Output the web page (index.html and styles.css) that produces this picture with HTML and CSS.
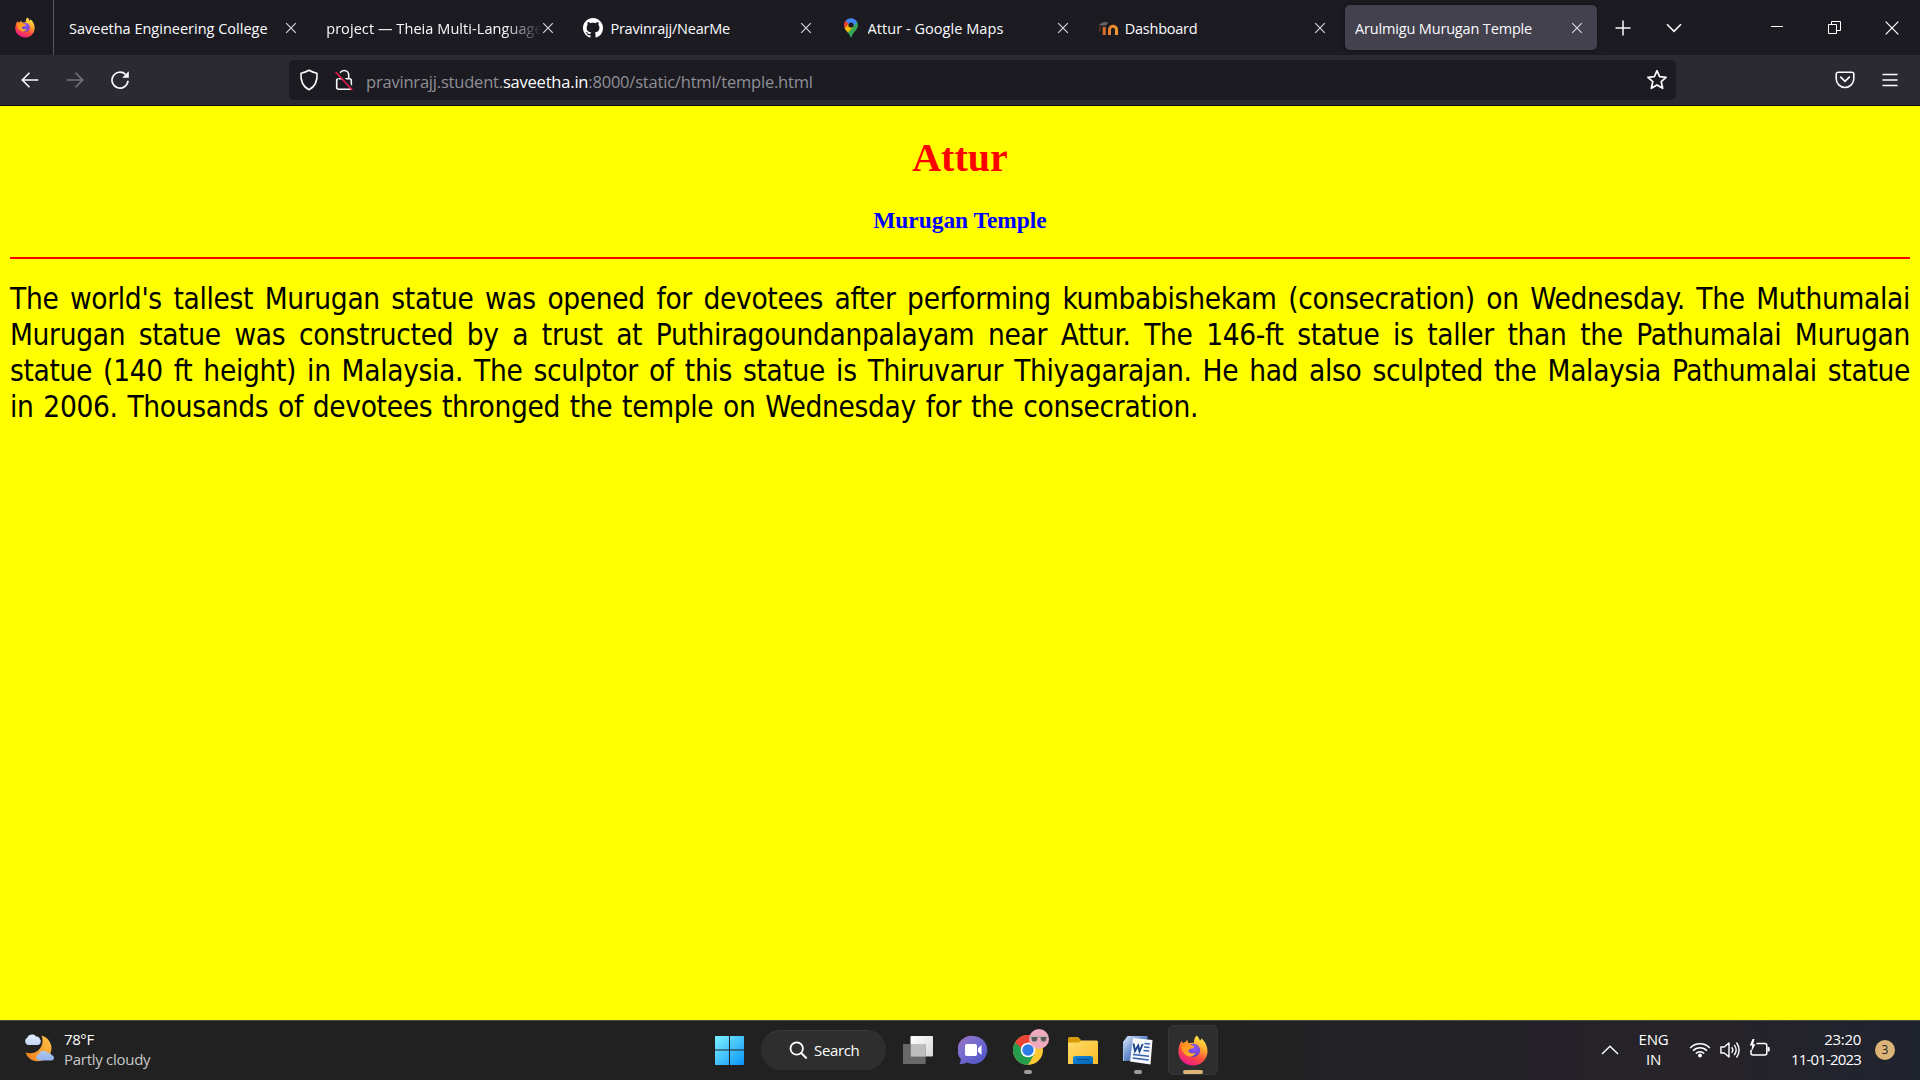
FILE: index.html
```html
<!DOCTYPE html>
<html lang="en">
<head>
<meta charset="utf-8">
<title>Arulmigu Murugan Temple</title>
<link rel="stylesheet" href="styles.css">
</head>
<body>
<svg class="defs" width="0" height="0" aria-hidden="true">
  <defs>
    <linearGradient id="ffBody" x1=".8" y1="0" x2=".3" y2="1"><stop offset="0" stop-color="#fff44f"/><stop offset=".35" stop-color="#ffa930"/><stop offset=".65" stop-color="#ff4d3d"/><stop offset="1" stop-color="#e8158f"/></linearGradient>
    <linearGradient id="ffHead" x1="0" y1="0" x2="1" y2="1"><stop offset="0" stop-color="#ff8a16"/><stop offset="1" stop-color="#ffb92e"/></linearGradient>
    <radialGradient id="ffGlobe" cx=".6" cy=".3" r=".8"><stop offset="0" stop-color="#9059ff"/><stop offset="1" stop-color="#5b3bb8"/></radialGradient>
    <symbol id="firefox" viewBox="0 0 30 30">
      <path fill="url(#ffBody)" d="M18.600 0c1.500 1 2.600 3 3.300 5 1-.2 1.300-1.300 1.400-2.300 3.900 3.300 6.300 8 6.200 13.300C29.300 24 23 30 15 30S.4 24 .4 16.300c0-4 1.100-8.300 3.600-11.100.2 1.200.5 1.900 1.100 2.500 1-.9 1.900-1.300 2.900-1.500L9 4l1.300 3.500 5.700-.3c-.3-2.700.8-5.400 2.600-7.200z"/>
      <circle cx="15.500" cy="14.800" r="6.600" fill="url(#ffGlobe)"/>
      <path fill="url(#ffHead)" d="M3.300 10.300c2-2.900 5-3.400 7.200-2.300 1.500.8 2.800 2.200 5.500 2.400.4 1.700-1.300 2.500-3.300 2.900-1.300.3-1.500 1.500-2.600 1.700 1 3 4.800 3.600 7.700 2.200-1.500 3.500-6 4.800-9.300 2.800-3.700-2.300-5.500-5.700-5.200-9.700z"/>
    </symbol>
    <symbol id="x" viewBox="0 0 12 12"><path d="M1.200 1.200l9.600 9.600M10.800 1.200L1.200 10.800" fill="none" stroke="currentColor" stroke-width="1.200"/></symbol>
    <linearGradient id="win" x1="0" y1="0" x2="1" y2="1"><stop offset="0" stop-color="#7df1ff"/><stop offset="1" stop-color="#0a94f8"/></linearGradient>
    <linearGradient id="tv" x1="0" y1="0" x2="1" y2="1"><stop offset="0" stop-color="#fff"/><stop offset="1" stop-color="#d8d8d8"/></linearGradient>
    <linearGradient id="chat" x1="0" y1="0" x2="1" y2="1"><stop offset="0" stop-color="#a36bb4"/><stop offset=".35" stop-color="#7b70cf"/><stop offset="1" stop-color="#4a4fc8"/></linearGradient>
    <linearGradient id="fold" x1="0" y1="0" x2="1" y2="1"><stop offset="0" stop-color="#ffdb6b"/><stop offset="1" stop-color="#f9bd27"/></linearGradient>
    <linearGradient id="foldBlue" x1="0" y1="0" x2="1" y2="1"><stop offset="0" stop-color="#1289dc"/><stop offset="1" stop-color="#0463b4"/></linearGradient>
    <linearGradient id="word" x1="0" y1="0" x2="1" y2="1"><stop offset="0" stop-color="#e5effc"/><stop offset=".45" stop-color="#6c93d0"/><stop offset="1" stop-color="#173f91"/></linearGradient>
    <linearGradient id="moon" x1="1" y1="0" x2="0" y2="1"><stop offset="0" stop-color="#ffc54a"/><stop offset="1" stop-color="#ef7d1a"/></linearGradient>
    <linearGradient id="cloud" x1="0" y1="0" x2="0" y2="1"><stop offset="0" stop-color="#e4eeff"/><stop offset="1" stop-color="#93b3ea"/></linearGradient>
    <linearGradient id="moodle" gradientUnits="userSpaceOnUse" x1="4" y1="0" x2="20" y2="0"><stop offset="0" stop-color="#d9652a"/><stop offset="1" stop-color="#f29a35"/></linearGradient>
  </defs>
</svg>

<header class="tabs">
  <div class="view"><svg width="20" height="21"><use href="#firefox"/></svg></div>
  <div class="tab"><span class="label t1">Saveetha Engineering College</span><svg class="close" width="12" height="12"><use href="#x"/></svg></div>
  <div class="tab"><span class="label t2 fade">project — Theia Multi-Language</span><svg class="close" width="12" height="12"><use href="#x"/></svg></div>
  <div class="tab">
    <svg class="fav" width="20" height="20" viewBox="0 0 16 16"><path fill="#fff" d="M8 0C3.580 0 0 3.580 0 8c0 3.540 2.290 6.530 5.470 7.590.4.070.55-.17.55-.38 0-.19-.01-.82-.01-1.490-2.010.37-2.530-.49-2.690-.94-.09-.23-.48-.94-.82-1.130-.28-.15-.68-.52-.01-.53.63-.01 1.080.58 1.230.82.72 1.210 1.870.87 2.330.66.070-.52.28-.87.51-1.070-1.780-.2-3.640-.89-3.640-3.950 0-.87.31-1.590.82-2.150-.08-.2-.36-1.020.08-2.120 0 0 .67-.21 2.200.82.64-.18 1.320-.27 2-.27s1.360.09 2 .27c1.530-1.040 2.200-.82 2.200-.82.44 1.100.16 1.920.08 2.120.51.56.82 1.270.82 2.150 0 3.070-1.870 3.750-3.650 3.950.29.25.54.73.54 1.480 0 1.070-.01 1.930-.01 2.200 0 .21.15.46.55.38A8.010 8.010 0 0 0 16 8c0-4.420-3.580-8-8-8z"/></svg>
    <span class="label t3">Pravinrajj/NearMe</span><svg class="close" width="12" height="12"><use href="#x"/></svg>
  </div>
  <div class="tab">
    <svg class="fav" width="20" height="20" viewBox="0 0 20 20"><path fill="#34a853" d="M3.200 9.500c1 3 3.800 4.500 5.200 7.300L10 20l1.500-3.300C13 13.500 16.900 11.500 16.900 7c0-1.200-.3-2.200-.7-3.100z"/><path fill="#fbbc04" d="M3.700 10.300c.9 1.800 2.200 2.800 3.300 4.300l5.400-6.200-5-3z"/><path fill="#ea4335" d="M4.700 2.600C3.600 3.800 3 5.300 3 7c0 1.300.3 2.400.8 3.300l4.500-5z"/><path fill="#4285f4" d="M4.700 2.600A7 7 0 0 1 16.200 3.900L11.800 9 7.500 5.900z"/><circle cx="10" cy="7" r="2.600" fill="#1c1b22"/></svg>
    <span class="label t4">Attur - Google Maps</span><svg class="close" width="12" height="12"><use href="#x"/></svg>
  </div>
  <div class="tab">
    <svg class="fav" width="20" height="20" viewBox="0 0 20 20"><path fill="none" stroke="url(#moodle)" stroke-width="3" d="M6.200 17V9M11.500 17v-5.500c0-4.300 7-4.300 7 0V17"/><path fill="#68605f" d="M.5 6.500L6 4l4.500.5L8 7.500l-4 .3z"/><path fill="none" stroke="#5a3322" stroke-width="1.500" d="M1.700 8v5.500"/></svg>
    <span class="label t5">Dashboard</span><svg class="close" width="12" height="12"><use href="#x"/></svg>
  </div>
  <div class="tab active"><span class="label t6">Arulmigu Murugan Temple</span><svg class="close" width="12" height="12"><use href="#x"/></svg></div>
  <svg class="plus" width="16" height="16" viewBox="0 0 16 16"><path d="M8 .5v15M.5 8h15" stroke="#fbfbfe" stroke-width="1.500"/></svg>
  <svg class="down" width="16" height="10" viewBox="0 0 16 10"><path d="M1 1.300l7 7 7-7" fill="none" stroke="#fbfbfe" stroke-width="1.600"/></svg>
  <div class="winctl">
    <svg width="13" height="13"><path d="M0 5.500h12" stroke="#fff"/></svg>
    <svg width="13" height="13"><path d="M.5 3.500h8v9h-8zM3.500 3.500v-3h9v9h-4" fill="none" stroke="#fff"/></svg>
    <svg width="14" height="14"><path d="M.7 .7l12.600 12.600M13.300 .7L.7 13.300" stroke="#fff" stroke-width="1.200"/></svg>
  </div>
</header>

<nav class="toolbar">
  <div class="navbtns">
    <svg width="18" height="18" viewBox="0 0 18 18"><path d="M17.300 9H1.300M8.500 1.800L1.300 9l7.200 7.200" fill="none" stroke="#fbfbfe" stroke-width="1.600"/></svg>
    <svg width="18" height="18" viewBox="0 0 18 18"><path d="M.7 9h16M9.500 1.800L16.700 9l-7.200 7.200" fill="none" stroke="#75747b" stroke-width="1.600"/></svg>
    <svg class="reload" width="20" height="20" viewBox="0 0 20 20"><path d="M15.500 4.300A8 8 0 1 0 18 10.800" fill="none" stroke="#fbfbfe" stroke-width="1.700"/><path d="M18.800 1.200v6.600h-6.600z" fill="#fbfbfe"/></svg>
  </div>
  <div class="urlbar">
    <svg class="shield" width="20" height="22" viewBox="0 0 20 22"><path d="M10 1.300c2.800 1.700 5.400 2.600 8 2.900.6 7.300-1.700 13.200-8 16.500C3.700 17.400 1.400 11.500 2 4.200c2.600-.3 5.200-1.200 8-2.900z" fill="none" stroke="#fbfbfe" stroke-width="1.600" stroke-linejoin="round"/></svg>
    <svg class="lock" width="20" height="22" viewBox="0 0 20 22"><path d="M5.700 6.500V6a4.500 4.500 0 0 1 9 0v3.500M5 9.800h10.500a1.800 1.800 0 0 1 1.800 1.800v6.800a1.800 1.800 0 0 1-1.800 1.800H4.500a1.800 1.800 0 0 1-1.800-1.800v-6.800a1.800 1.800 0 0 1 1.800-1.800" fill="none" stroke="#fbfbfe" stroke-width="1.600"/><path d="M3.200 2.200L19 19.500" stroke="#1c1b22" stroke-width="2"/><path d="M1.700 3l16.500 18" stroke="#e31b47" stroke-width="1.700"/></svg>
    <div class="url"><span class="u1">pravinrajj.student.</span><span class="u2">saveetha.in</span><span class="u3">:8000/static/html/temple.html</span></div>
    <svg class="star" width="22" height="22" viewBox="0 0 22 22"><path d="M11 1.700l2.600 6 6.500.6-4.900 4.300 1.500 6.700L11 15.900l-5.700 3.400 1.500-6.700-4.900-4.300 6.500-.6z" fill="none" stroke="#fbfbfe" stroke-width="1.700" stroke-linejoin="round"/></svg>
  </div>
  <div class="menus">
    <svg width="20" height="18" viewBox="0 0 20 18"><path d="M3.200 1.200h13.600a2 2 0 0 1 2 2v4.500a8.800 8.800 0 0 1-17.600 0V3.200a2 2 0 0 1 2-2z" fill="none" stroke="#fbfbfe" stroke-width="1.600"/><path d="M5.700 6.200L10 10.300l4.300-4.100" fill="none" stroke="#fbfbfe" stroke-width="1.700" stroke-linecap="round"/></svg>
    <svg width="16" height="14" viewBox="0 0 16 14"><path d="M.5 1.500h15M.5 7h15M.5 12.500h15" stroke="#fbfbfe" stroke-width="1.500"/></svg>
  </div>
</nav>

<main class="page">
  <h1>Attur</h1>
  <h3>Murugan Temple</h3>
  <hr>
  <div class="story">
    <div>The world's tallest Murugan statue was opened for devotees after performing kumbabishekam (consecration) on Wednesday. The Muthumalai</div>
    <div>Murugan statue was constructed by a trust at Puthiragoundanpalayam near Attur. The 146-ft statue is taller than the Pathumalai Murugan</div>
    <div>statue (140 ft height) in Malaysia. The sculptor of this statue is Thiruvarur Thiyagarajan. He had also sculpted the Malaysia Pathumalai statue</div>
    <div class="last">in 2006. Thousands of devotees thronged the temple on Wednesday for the consecration.</div>
  </div>
</main>

<footer class="taskbar">
  <div class="weather">
    <svg width="32" height="30" viewBox="0 0 32 30"><path fill="url(#moon)" d="M18.500 2.500c7 2 11.500 9 9.500 16-2.300 8-10 11-17 9.200-4.500-1.200-7-4.500-8.500-8.200 5 1.500 10.500.8 14-3.500 3.300-4 3.800-8.700 2-13.500z"/><path fill="url(#cloud)" d="M5 12a4 4 0 0 1-.5-7.500C5 1.500 11 0 13 3.500c2.500-.2 3.500 1 3.800 2.500 2 1.500 1 6-2 6zM17 27.500c-4.500 0-5-5.500-1-6.200.5-4 6.500-5 8.500-1.500 2-.3 3.500.7 4 2.200 3.500.5 3 5.500 0 5.500z"/></svg>
    <div class="two"><span class="w1">78°F</span><span class="w2">Partly cloudy</span></div>
  </div>
  <div class="apps">
    <div class="cell"><svg width="30" height="30" viewBox="0 0 30 30"><path fill="url(#win)" d="M.5 1H14v13.500H0V1.500zM15 1h13.500l.5.500v13H15zM0 15.500h14V30H.5l-.5-.5zM15 15.500h14v14l-.5.500H15z"/></svg></div>
    <div class="search"><svg width="19" height="19" viewBox="0 0 19 19"><circle cx="7.700" cy="7.500" r="6.200" fill="none" stroke="#fff" stroke-width="1.800"/><path d="M12.200 12l5.500 5.500" stroke="#fff" stroke-width="1.900"/></svg><span>Search</span></div>
    <div class="cell"><svg width="30" height="28" viewBox="0 0 30 28"><rect x="7.500" width="22.500" height="20.500" rx="1" fill="url(#tv)"/><rect y="8" width="22.700" height="20" rx="1" fill="#777" fill-opacity=".82"/><path d="M8 8h14.500v12.500H8z" fill="#bdbdbd"/></svg></div>
    <div class="cell"><svg width="30" height="30" viewBox="0 0 30 30"><path fill="url(#chat)" d="M15.500 1a14 14 0 1 1-6.500 26.500c-2.500 1.200-5 1.700-7.500 1.500 1-1.700 1.400-3.300 1.300-5A14 14 0 0 1 15.500 1z"/><rect x="7" y="9" width="12" height="12" rx="1.800" fill="#fff"/><path d="M20 13.200l3.500-3.200v10L20 16.800z" fill="#fff"/></svg></div>
    <div class="cell">
      <svg width="30" height="30" viewBox="0 0 30 30"><circle cx="15" cy="15" r="15" fill="#fcc934"/><path fill="#ea4335" d="M2 7.500A15 15 0 0 1 28 7.500H15L9 18.500z"/><path fill="#259b4c" d="M2 7.500a15 15 0 0 0 13 22.500l6.500-11.200H15z"/><circle cx="15" cy="15" r="7.300" fill="#fff"/><circle cx="15" cy="15" r="5.700" fill="#2d7ce8"/></svg>
      <svg class="avatar" width="20" height="20" viewBox="0 0 20 20"><circle cx="10" cy="10" r="10" fill="#f0a9bd"/><path d="M1.500 7.500h17" stroke="#a89c98" stroke-width="1.300"/><path d="M2 7.500h7q0 5.500-3.700 5.500T2 7.500zM11 7.500h7q0 5.500-3.400 5.500T11 7.500z" fill="#5d565a" stroke="#c2b3b4"/></svg>
      <i class="run"></i>
    </div>
    <div class="cell"><svg width="30" height="27" viewBox="0 0 30 27"><path fill="#d99a08" d="M0 1.500Q0 0 1.500 0H10l3.500 3.500V9H0z"/><path fill="url(#fold)" d="M0 5.500h10.500L14 3.500h14.500Q30 3.500 30 5v22H0z"/><path fill="url(#foldBlue)" d="M5 27v-5.500q0-2.500 2.500-2.500h15q2.500 0 2.500 2.500V27z"/><path d="M9 22.500h12" stroke="#064b8b" stroke-width="1.200"/></svg></div>
    <div class="cell">
      <svg width="30" height="30" viewBox="0 0 30 30"><path fill="url(#word)" d="M5 1h19.500l-1 24.500L0 26V7z"/><path d="M5 1L.5 7v19" fill="none" stroke="#a8c2eb"/><path fill="#f6f8fb" d="M10 3L29.500 5l-2 24.500L7 26.500z"/><path d="M21.500 8.500l5.500.6M21 12l5.500.6M20.500 15.500l5.700.6M10 19.500l16 1.800M9.700 23l16 2" stroke="#3762ad" stroke-width="1.500"/><path d="M10.500 8.500l1.500 7.500 3.200-5.500 1.300 6 3.200-7.500" fill="none" stroke="#1c438f" stroke-width="1.900"/></svg>
      <i class="run"></i>
    </div>
    <div class="cell on"><svg width="30" height="31"><use href="#firefox"/></svg><i class="run wide"></i></div>
  </div>
  <div class="tray">
    <svg class="up" width="18" height="10" viewBox="0 0 18 10"><path d="M1 9l8-7.800L17 9" fill="none" stroke="#fff" stroke-width="1.400"/></svg>
    <div class="two lang"><span>ENG</span><span>IN</span></div>
    <svg class="wifi" width="22" height="16" viewBox="0 0 22 16"><g fill="none" stroke="#fff" stroke-width="1.500"><path d="M1.200 6a13.500 13.500 0 0 1 19.600 0M4 8.800a9.700 9.700 0 0 1 14 0M6.800 11.500a5.900 5.900 0 0 1 8.400 0"/></g><circle cx="11" cy="13.600" r="2" fill="#fff"/></svg>
    <svg class="sound" width="20" height="18" viewBox="0 0 20 18"><g fill="none" stroke="#fff" stroke-width="1.400"><path d="M.9 6h3.300L9 2v14l-4.800-4H.9z" stroke-linejoin="round"/><path d="M11.700 6.300q2.200 2.700 0 5.400M14.200 3.900q4 5.100 0 10.200M16.500 1.500q5.200 7.500 0 15"/></g></svg>
    <svg class="batt" width="21" height="18" viewBox="0 0 21 18"><path d="M7.500 4.500h8.300q2 0 2 2v7.500q0 2-2 2H4q-2 0-2-2v-3" fill="none" stroke="#fff" stroke-width="1.500"/><path d="M18.500 8h1.200q1 0 1 1v2.500q0 1-1 1h-1.200zM3.500 0L.8 6.500h2.400L2.200 13l4.300-7.700H4.200L5.500 0z" fill="#fff"/></svg>
    <div class="two clock"><span class="c1">23:20</span><span class="c2">11-01-2023</span></div>
    <div class="count">3</div>
  </div>
</footer>
</body>
</html>
```
FILE: styles.css
```css
* { box-sizing: border-box; }
body {
  margin: 0;
  width: 1920px;
  height: 1080px;
  overflow: hidden;
  display: flex;
  flex-direction: column;
  background: #ff0;
  font-family: "Open Sans", "Noto Sans", sans-serif;
}
svg { display: block; flex: none; }
.defs { position: absolute; }

/* tab strip */
.tabs {
  flex: none;
  height: 55px;
  display: flex;
  align-items: center;
  background: #1c1b22;
  color: #fbfbfe;
}
.view {
  width: 54px;
  height: 55px;
  padding-left: 15px;
  margin-right: 5px;
  display: flex;
  align-items: center;
  border-right: 1px solid #56555b;
}
.tab {
  flex: none;
  width: 252.200px;
  height: 45px;
  margin-right: 5px;
  padding: 0 14px 0 10px;
  display: flex;
  align-items: center;
  font-size: 14.500px;
  white-space: nowrap;
}
.active { background: #42414d; border-radius: 5px; box-shadow: 0 0 4px #0006; }
.label { flex: 1; min-width: 0; overflow: hidden; padding-top: 2px; line-height: 24px; }
.fade { -webkit-mask-image: linear-gradient(to left, transparent, #000 38px); mask-image: linear-gradient(to left, transparent, #000 38px); }
.t2 { letter-spacing: .070px; }
.t3 { letter-spacing: -.220px; }
.t4 { letter-spacing: .050px; }
.t5 { letter-spacing: -.250px; }
.t6 { letter-spacing: -.160px; }
.fav { margin-right: 7px; }
.close { color: #d5d5da; }
.plus { margin-left: 13px; }
.down { margin-left: 35px; }
.winctl { margin-left: auto; padding-right: 21px; display: flex; gap: 44px; }

/* address bar */
.toolbar {
  flex: none;
  height: 51px;
  display: flex;
  align-items: center;
  background: #2b2a33;
  border-bottom: 1px solid #0c0c0d;
}
.navbtns { width: 289px; padding-left: 21px; display: flex; align-items: center; gap: 27px; }
.reload { margin-left: -1px; }
.urlbar {
  width: 1387px;
  height: 40px;
  padding: 0 8px 0 10px;
  display: flex;
  align-items: center;
  background: #1c1b22;
  border-radius: 5px;
}
.lock { margin: 0 12px 0 15px; }
.url { flex: 1; padding-top: 3px; font-size: 16.500px; line-height: 26px; letter-spacing: -.200px; white-space: nowrap; color: #8f8f96; }
.u2 { color: #fbfbfe; }
.menus { margin-left: auto; padding-right: 22px; display: flex; align-items: center; gap: 27px; }

/* document */
.page { flex: 1; padding: 26px 10px 0; font-family: "Liberation Serif", serif; text-align: center; }
h1 { margin: 3px 0 27px; font-size: 40px; line-height: 45px; color: red; }
h3 { margin: 0 0 24px; font-size: 23.400px; line-height: 26px; color: blue; }
hr { margin: 0 0 22px; height: 2px; border: 0; background: red; }
.story {
  font-family: "DejaVu Sans Condensed", "DejaVu Sans", sans-serif;
  font-stretch: condensed;
  font-size: 29.500px;
  line-height: 36px;
  letter-spacing: -.320px;
  color: #000;
  text-align: justify;
  text-align-last: justify;
}
.last { width: 1188px; }

/* taskbar */
.taskbar {
  flex: none;
  height: 60px;
  padding-bottom: 1px;
  display: grid;
  grid-template-columns: 705px 513px 1fr;
  align-items: center;
  background: linear-gradient(90deg, #212121 0 62%, #252329 80%, #262329 90%, #20242f);
  border-top: 1px solid #48483c;
  color: #fff;
  font-size: 15px;
}
.two { display: flex; flex-direction: column; line-height: 20px; margin-top: -3px; white-space: nowrap; }
.weather { display: flex; align-items: center; padding-left: 23px; gap: 9px; }
.weather svg { margin-top: -4px; }
.w1 { letter-spacing: -.400px; }
.w2 { color: #c8c8c8; letter-spacing: -.280px; }
.apps { display: flex; align-items: center; gap: 5px; }
.cell { position: relative; flex: none; width: 50px; height: 50px; display: grid; place-items: center; }
.on { background: #2e2e2e; border: 1px solid #363636; border-radius: 5px; }
.run { position: absolute; bottom: 1px; left: 21px; width: 8px; height: 4px; border-radius: 2px; background: #9b9b9b; }
.wide { left: 14px; bottom: 0; width: 20px; background: #dcb478; }
.avatar { position: absolute; left: 26px; top: 4px; }
.search {
  flex: none;
  width: 125px;
  height: 40px;
  margin: 0 2px 0 1px;
  padding: 0 0 1px 28px;
  display: flex;
  align-items: center;
  gap: 6px;
  border-radius: 20px;
  background: #2e2e2e;
  border-top: 1px solid #3c3c3c;
  letter-spacing: -.350px;
}
.tray { display: flex; align-items: center; }
.up { margin-left: 383px; }
.lang { width: 33px; margin-left: 18px; align-items: center; letter-spacing: -.200px; }
.wifi { margin-left: 19px; }
.sound { margin-left: 9px; }
.batt { margin-left: 9px; margin-top: -4px; }
.clock { width: 75px; margin-left: 16px; align-items: flex-end; letter-spacing: -.300px; }
.c2 { letter-spacing: -.820px; }
.count { width: 20px; height: 20px; margin-left: 14px; border-radius: 50%; background: #dcb478; color: #222; font-size: 12px; line-height: 20px; text-align: center; }
```
